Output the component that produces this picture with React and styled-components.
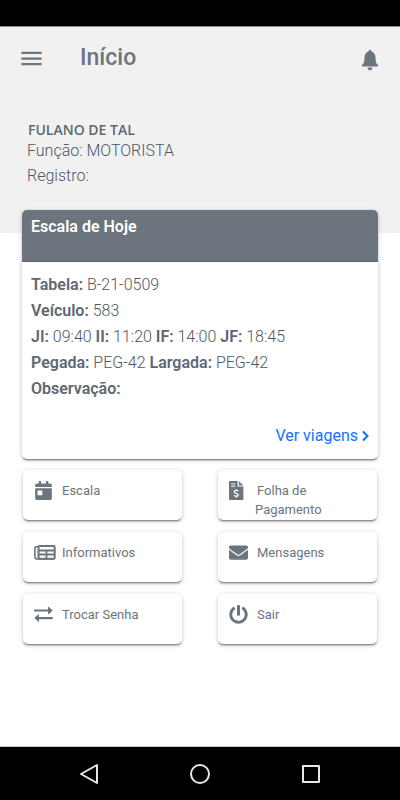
import * as React from "react";
import styled, { createGlobalStyle } from "styled-components";
import { IoIosNotifications, IoMdMenu } from "react-icons/io";
import { FaCalendarDay, FaEnvelope, FaPowerOff } from "react-icons/fa";

const GRAY = "#6c757d";
const TEXT = "#4c5863";

const GlobalStyle = createGlobalStyle`
  * {
    box-sizing: border-box;
  }

  body {
    margin: 0;
    background: #fff;
    color: ${TEXT};
    font-family: Roboto, "Liberation Sans", sans-serif;
    font-size: 16px;
    font-weight: 300;
  }

  b {
    color: #5d6872;
    font-weight: 600;
  }
`;

const Screen = styled.div`
  display: flex;
  flex-direction: column;
  min-height: 100vh;
`;

const StatusBar = styled.div`
  height: 26px;
  background: #000;
`;

const Top = styled.header`
  height: 207px;
  background: #f1f1f1;
  border-top: 1px solid #8a8a8a;
`;

const Toolbar = styled.div`
  display: flex;
  align-items: center;
  height: 62px;
  padding: 0 17px 0 18px;
`;

const IconButton = styled.button`
  display: flex;
  padding: 0;
  border: 0;
  background: none;
  color: ${GRAY};
  font-size: ${props => props.$size}px;
  cursor: pointer;
`;

const BellButton = styled(IconButton)`
  padding-top: 4px;
`;

const Title = styled.h1`
  flex: 1;
  margin: 0 0 0 35px;
  color: ${GRAY};
  font-size: 23px;
  font-weight: 500;
  line-height: 28px;
`;

const Profile = styled.section`
  padding: 32px 27px 0;
`;

const UserName = styled.h2`
  margin: 0;
  padding-left: 1px;
  color: #5d6872;
  font-family: "Open Sans", "Noto Sans", sans-serif;
  font-size: 14px;
  font-weight: 600;
  line-height: 17px;
`;

const ProfileLine = styled.p`
  margin: 0;
  line-height: 25px;
`;

const Content = styled.main`
  flex: 1;
  margin-top: -23px;
  padding: 0 22px;
`;

const Card = styled.section`
  display: flex;
  flex-direction: column;
  min-height: 249px;
  border-radius: 5px;
  background: #fff;
  box-shadow: 0 2px 2px -1px rgba(0, 0, 0, 0.5), 0 1px 5px rgba(0, 0, 0, 0.2);
  overflow: hidden;
`;

const CardHeader = styled.h2`
  height: 52px;
  margin: 0;
  padding: 4px 9px;
  border-bottom: 1px solid #5c666f;
  background: ${GRAY};
  color: #fff;
  font-size: 16px;
  font-weight: 600;
  line-height: 25px;
`;

const CardBody = styled.div`
  display: flex;
  flex: 1;
  flex-direction: column;
  padding: 10px 9px;
`;

const Line = styled.p`
  margin: 0;
  line-height: 26px;
`;

const TripsLink = styled.a`
  display: flex;
  align-items: center;
  align-self: flex-end;
  gap: 4px;
  margin-top: auto;
  color: #1473fa;
  font-weight: 400;
  line-height: 26px;
  text-decoration: none;
`;

const Menu = styled.nav`
  display: grid;
  grid-template-columns: 1fr 1fr;
  gap: 12px 36px;
  padding: 11px 1px;
`;

const MenuButton = styled.button`
  display: flex;
  align-items: flex-start;
  height: 50px;
  padding: 11px;
  border: 0;
  border-radius: 5px;
  background: #fff;
  box-shadow: 0 2px 2px -1px rgba(0, 0, 0, 0.5), 0 1px 5px rgba(0, 0, 0, 0.2);
  color: ${GRAY};
  font-family: inherit;
  font-size: 13px;
  line-height: 19px;
  text-align: left;
  cursor: pointer;
`;

const MenuIcon = styled.span`
  display: flex;
  flex: none;
  align-items: center;
  width: 28px;
  height: 19px;
  color: ${GRAY};
  font-size: 19px;
`;

const MenuLabel = styled.span`
  margin-left: ${props => (props.$wrapped ? -2 : 0)}px;
  text-indent: ${props => (props.$wrapped ? 2 : 0)}px;
`;

const SystemBar = styled.footer`
  display: flex;
  align-items: center;
  justify-content: space-between;
  height: 54px;
  padding: 0 78px;
  border-top: 1px solid #c8c8c8;
  background: #000;
`;

const SystemIcon = styled.svg`
  display: block;
  width: 22px;
  height: 22px;
  fill: none;
  stroke: #e8e8e8;
  stroke-width: 2;
  stroke-linejoin: round;
`;

const ChevronIcon = () => (
  <svg width="7" height="12" viewBox="0 0 7 12" fill="none">
    <path d="M1 1.6 5.4 6 1 10.4" stroke="currentColor" strokeWidth="2.1" />
  </svg>
);

const InvoiceIcon = () => (
  <svg width="15" height="19" viewBox="0 0 15 19" fill="none">
    <path d="M.8 0H8.6v5.6H14.4V18.2q0 .8-.8.8H.8Q0 19 0 18.2V.8Q0 0 .8 0Z" fill="currentColor" />
    <path d="M9.8 0 14.4 4.5H9.8Z" fill="currentColor" />
    <path d="M2.2 3h4M2.2 5.3h4" stroke="#fff" strokeWidth="1.1" />
    <path
      d="M9.2 10.2C8.5 9.2 5.2 9 5.2 10.8c0 1.8 4.1 1.2 4.1 3.1 0 1.8-3.5 1.6-4.3.5M7.2 8.2v1.3M7.2 15v1.5"
      stroke="#fff"
      strokeWidth="1.3"
    />
  </svg>
);

const NewsIcon = () => (
  <svg width="22" height="15" viewBox="0 0 22 15" fill="none" stroke="currentColor">
    <path d="M4 1.8H2Q.9 1.8.9 2.8V12q0 1.9 1.9 1.9H20" strokeWidth="1.6" />
    <rect x="4.5" y="1" width="16.2" height="12.8" rx="1" strokeWidth="2" />
    <path d="M4 5.5h17M4 9.5h17" strokeWidth="2" />
    <path d="M12.5 5v9" strokeWidth="1.8" />
  </svg>
);

const SwapIcon = () => (
  <svg width="19" height="17" viewBox="0 0 19 17" fill="currentColor">
    <path d="M.6 3.5H14V1.4q0-1 .8-.4l3.5 3q.5.5 0 1l-3.5 3q-.8.6-.8-.4V5.6H.6q-.6 0-.6-.6V4q0-.5.6-.5Z" />
    <path d="M18.2 11.1H5V9q0-1-.8-.4l-3.5 3q-.5.5 0 1l3.5 3q.8.6.8-.4v-2h13.2q.6 0 .6-.6v-1q0-.5-.6-.5Z" />
  </svg>
);

const schedule = [
  [["Tabela", "B-21-0509"]],
  [["Veículo", "583"]],
  [["JI", "09:40"], ["II", "11:20"], ["IF", "14:00"], ["JF", "18:45"]],
  [["Pegada", "PEG-42"], ["Largada", "PEG-42"]],
  [["Observação", ""]]
];

const menuItems = [
  { label: "Escala", Icon: FaCalendarDay },
  { label: "Folha de Pagamento", Icon: InvoiceIcon, wrapped: true },
  { label: "Informativos", Icon: NewsIcon },
  { label: "Mensagens", Icon: FaEnvelope },
  { label: "Trocar Senha", Icon: SwapIcon },
  { label: "Sair", Icon: FaPowerOff }
];

const App = () => (
  <Screen>
    <GlobalStyle />
    <StatusBar />
    <Top>
      <Toolbar>
        <IconButton $size={27} aria-label="Menu">
          <IoMdMenu />
        </IconButton>
        <Title>Início</Title>
        <BellButton $size={26} aria-label="Notificações">
          <IoIosNotifications />
        </BellButton>
      </Toolbar>
      <Profile>
        <UserName>FULANO DE TAL</UserName>
        <ProfileLine>Função: MOTORISTA</ProfileLine>
        <ProfileLine>Registro:</ProfileLine>
      </Profile>
    </Top>
    <Content>
      <Card>
        <CardHeader>Escala de Hoje</CardHeader>
        <CardBody>
          {schedule.map((line, index) => (
            <Line key={index}>
              {line.map(([name, value]) => (
                <React.Fragment key={name}>
                  <b>{name}:</b> {value}{" "}
                </React.Fragment>
              ))}
            </Line>
          ))}
          <TripsLink href="#viagens">
            Ver viagens <ChevronIcon />
          </TripsLink>
        </CardBody>
      </Card>
      <Menu>
        {menuItems.map(({ label, Icon, wrapped }) => (
          <MenuButton key={label}>
            <MenuIcon>
              <Icon />
            </MenuIcon>
            <MenuLabel $wrapped={wrapped}>{label}</MenuLabel>
          </MenuButton>
        ))}
      </Menu>
    </Content>
    <SystemBar>
      <SystemIcon viewBox="0 0 22 22">
        <path d="M19 2v18L3 11z" />
      </SystemIcon>
      <SystemIcon viewBox="0 0 22 22">
        <circle cx="11" cy="11" r="9" />
      </SystemIcon>
      <SystemIcon viewBox="0 0 22 22">
        <rect x="3" y="3" width="16" height="16" />
      </SystemIcon>
    </SystemBar>
  </Screen>
);

export default App;
